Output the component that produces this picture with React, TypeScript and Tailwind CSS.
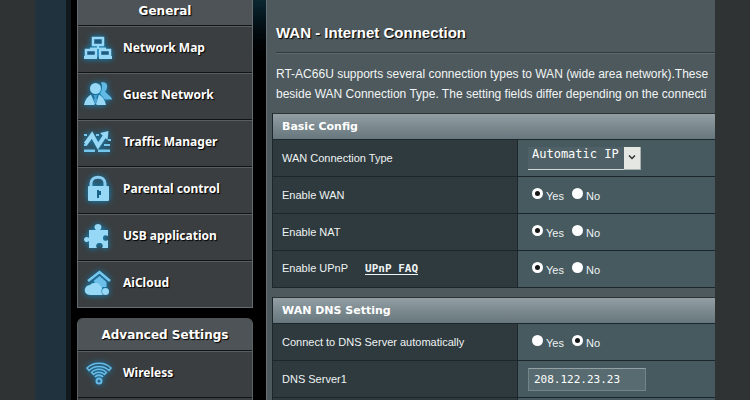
import React, { useState } from 'react';

interface MenuItem {
  label: string;
  icon: React.ReactNode;
}

const generalItems: MenuItem[] = [
  { label: 'Network Map', icon: <NetworkIcon /> },
  { label: 'Guest Network', icon: <GuestIcon /> },
  { label: 'Traffic Manager', icon: <TrafficIcon /> },
  { label: 'Parental control', icon: <LockIcon /> },
  { label: 'USB application', icon: <PuzzleIcon /> },
  { label: 'AiCloud', icon: <CloudIcon /> }
];

const advancedItems: MenuItem[] = [
  { label: 'Wireless', icon: <WirelessIcon /> }
];

function Icon({ children }: { children: React.ReactNode }) {
  return (
    <svg
      viewBox="0 0 30 30"
      aria-hidden="true"
      className="h-[30px] w-[30px] shrink-0 overflow-visible drop-shadow-[0_0_3px_#0a8fd0]"
      fill="#96d8f5"
    >
      {children}
    </svg>
  );
}

function NetworkIcon() {
  return (
    <Icon>
      <g fill="#1d5a80" stroke="#96d8f5" strokeWidth="2.500">
        <rect x="9" y="5" width="10" height="7" />
        <rect x="2" y="17" width="10" height="6" />
        <rect x="16" y="17" width="10" height="6" />
      </g>
      <path d="M13 13h2v2h-2zM6 14.500h16V16H6zM0 23h13v3H0zM15 23h13v3H15z" />
    </Icon>
  );
}

function GuestIcon() {
  return (
    <Icon>
      <path d="M17 2.500c4-1 7 1 6 5-.3 2-1 3-2 4l3 3c3 2 4 4 4 5h-7l-5-6c2-3 3-7 1-11z" fill="#62b9e4" />
      <circle cx="11.500" cy="8.500" r="5.500" />
      <path d="M0 25c1-5 3-8 7-10.500L11 24l-1 1zM15 14.500c4 2.500 6 5.500 7 10.500h-9l-1-1z" />
      <path d="M9.500 15h4l-1 2.500.8 3.500-1.800 3-1.800-3 .8-3.500z" fill="#4c9fce" />
    </Icon>
  );
}

function TrafficIcon() {
  return (
    <Icon>
      <path d="M0 7h3v2H0zM0 17h3v2H0zM0 22.500h11V25H0zM14 22.500h12V25H14zM20 17h6v2h-6zM12 7h3v2h-3zM24 12h3v2h-3z" fill="#74c6ed" />
      <path d="M1.500 17L8 8l6 11 8-12" fill="none" stroke="#96d8f5" strokeWidth="4" />
      <path d="M16 6l8.500-2-1 9z" />
    </Icon>
  );
}

function LockIcon() {
  return (
    <Icon>
      <path d="M7 13V9.500c0-8.500 14-8.500 14 0V13" fill="none" stroke="#8acdf0" strokeWidth="3" />
      <rect x="4" y="12" width="21" height="15" rx="1" />
      <path d="M13 16h2v1h2v4h-2v3h-2z" fill="#17638a" />
    </Icon>
  );
}

function PuzzleIcon() {
  return (
    <Icon>
      <path d="M5 9h7c-3-3-1-6 2-6s5 3 2 6h8v6c-4-2-5 0-5 2s1 4 5 2v8h-6c2-3 0-5-2.500-5s-4.500 2-2.500 5H5v-7c-2 2-5 1-5-1.500S3 15 5 17z" />
    </Icon>
  );
}

function CloudIcon() {
  return (
    <Icon>
      <path d="M4 13L15.500 4 26 13" fill="none" stroke="#77c8f0" strokeWidth="2.500" />
      <path d="M15.500 8l7 6v5h-7l-6-6z" fill="#6bbfe9" />
      <path d="M6 27c-7 0-7-9.500 0-10 3-3.500 9-3 10.500 1 2 1 2 2.500 1 4 0 2 0 4 1.500 5z" />
      <circle cx="21.500" cy="23.500" r="3.500" />
    </Icon>
  );
}

function WirelessIcon() {
  return (
    <Icon>
      <g fill="none" stroke="#68bbe8" strokeWidth="1.500">
        <path d="M3 10c6-6.500 18-6.500 24 0l-2 2.500c-5-5.500-15-5.500-20 0z" />
        <path d="M7.500 14.500c4-4.500 11-4.500 15 0l-2 2c-3-3-8-3-11 0z" />
        <path d="M11 19c2-2.500 6-2.500 8 0" strokeWidth="2" />
        <circle cx="15" cy="23" r="2.500" strokeWidth="2" />
      </g>
    </Icon>
  );
}

function MenuRow({ label, icon }: MenuItem) {
  return (
    <li className="h-[47px] border-t border-[#111415]">
      <a
        href="#"
        className="flex h-full items-center gap-[9px] border-t border-[#575d60] pb-[3px] pl-[6px] font-['Noto_Sans',sans-serif] text-[12px] leading-4 font-bold text-white [text-shadow:1px_1px_1px_#000]"
      >
        {icon}
        {label}
      </a>
    </li>
  );
}

interface YesNoProps {
  name: string;
  value: boolean;
  onChange: (value: boolean) => void;
}

function YesNo({ name, value, onChange }: YesNoProps) {
  const options = [
    { text: 'Yes', on: true },
    { text: 'No', on: false }
  ];

  return (
    <div className="flex gap-[8px] pl-[4px]">
      {options.map(option => (
        <label key={option.text} className="flex items-start gap-[3px]">
          <input
            type="radio"
            name={name}
            checked={value === option.on}
            onChange={() => onChange(option.on)}
            className="h-[11px] w-[11px] appearance-none rounded-full bg-white checked:border-[3px] checked:border-white checked:bg-[#151515]"
          />
          <span className="pt-[1px] leading-[14px]">{option.text}</span>
        </label>
      ))}
    </div>
  );
}

function SettingsTable({ title, children }: { title: string; children: React.ReactNode }) {
  return (
    <table className="w-full table-fixed border-separate border-spacing-0 border-l border-[#1d2629] text-[11px] text-[#eef3f3]">
      <colgroup>
        <col className="w-[245px]" />
        <col />
      </colgroup>
      <thead>
        <tr>
          <th
            colSpan={2}
            className="h-[27px] border-y border-t-[#2b3538] border-b-[#1d2629] bg-linear-to-b from-[#929ea3] to-[#67777d] p-0 pl-[9px] text-left font-['DejaVu_Sans',sans-serif] leading-4 font-bold text-white"
          >
            {title}
          </th>
        </tr>
      </thead>
      <tbody>{children}</tbody>
    </table>
  );
}

function SettingRow({ label, children }: { label: React.ReactNode; children?: React.ReactNode }) {
  return (
    <tr>
      <th scope="row" className="h-[37px] border-r border-b border-[#1d2629] bg-[#2f3a3e] p-0 pl-[9px] text-left font-normal">
        {label}
      </th>
      <td className="h-[37px] border-b border-[#1d2629] bg-[#475a5f] p-0 pl-[10px]">{children}</td>
    </tr>
  );
}

export default function App() {
  const [wan, setWan] = useState(true);
  const [nat, setNat] = useState(true);
  const [upnp, setUpnp] = useState(true);
  const [autoDns, setAutoDns] = useState(false);
  const [dns, setDns] = useState('208.122.23.23');

  return (
    <div className="flex h-screen overflow-hidden bg-[#303334] px-[35px] font-['Liberation_Sans',Arial,sans-serif]">
      <div className="w-[31px] shrink-0 bg-[#1f323d]" />
      <div className="w-[5px] shrink-0 bg-[#11191d]" />

      <aside className="w-[195px] shrink-0 bg-linear-to-b from-[#0c2731] to-black to-[70px] pr-[13px]">
        <div className="h-full bg-black pl-[6px]">
          <nav className="border-x border-b border-[#666d70] bg-[#3a3e40]">
            <h2 className="h-[25px] bg-[#4d5356] pt-[3px] text-center font-['DejaVu_Sans',sans-serif] text-[12px] leading-4 font-bold text-white [text-shadow:1px_1px_1px_#000]">
              General
            </h2>
            <ul>
              {generalItems.map(item => (
                <MenuRow key={item.label} {...item} />
              ))}
            </ul>
          </nav>

          <nav className="mt-[10px] rounded-t-[6px] border-x border-[#5b6265] bg-[#3a3e40]">
            <h2 className="h-[32px] rounded-t-[6px] bg-[#4d5356] pt-[9px] text-center font-['DejaVu_Sans',sans-serif] text-[12px] leading-4 font-bold text-white [text-shadow:1px_1px_1px_#000]">
              Advanced Settings
            </h2>
            <ul>
              {advancedItems.map(item => (
                <MenuRow key={item.label} {...item} />
              ))}
              <li className="h-[47px] border-t border-[#111415]" />
            </ul>
          </nav>
        </div>
      </aside>

      <main className="min-w-0 flex-1 overflow-hidden border-l border-[#667277] bg-[#4d595d] pl-[5px]">
        <h1 className="mx-[4px] pt-[23px] pb-[9px] text-[15px] leading-5 font-bold whitespace-nowrap text-white [text-shadow:1px_1px_1px_#000]">
          WAN - Internet Connection
        </h1>
        <hr className="ml-[4px] border-t border-b border-t-[#303b3f] border-b-[#5d696d]" />
        <p className="mt-[10px] ml-[4px] text-[12px] leading-5 whitespace-nowrap text-[#f2f5f5]">
          RT-AC66U supports several connection types to WAN (wide area network).These
          <br />
          beside WAN Connection Type. The setting fields differ depending on the connecti
        </p>

        <div className="mt-[9px] flex flex-col gap-[9px]">
          <SettingsTable title="Basic Config">
            <SettingRow label={<label htmlFor="wan-type">WAN Connection Type</label>}>
              <div className="relative w-[113px]">
                <select
                  id="wan-type"
                  className="block h-[23px] w-full appearance-none border-b border-[#cfd6d6] bg-[#4f6166] pr-[17px] pb-[7px] pl-[4px] font-['DejaVu_Sans_Mono',monospace] text-[12px] leading-[14px] text-white"
                >
                  <option>Automatic IP</option>
                </select>
                <span className="pointer-events-none absolute top-0 right-0 flex h-[23px] w-[17px] items-center justify-center border-r border-b border-[#a9b0ae] bg-[#e4e7e2]">
                  <svg viewBox="0 0 8 5" className="h-[5px] w-[8px]" fill="none" stroke="#333" strokeWidth="1.500" aria-hidden="true">
                    <path d="M1 .5l3 3 3-3" />
                  </svg>
                </span>
              </div>
            </SettingRow>
            <SettingRow label="Enable WAN">
              <YesNo name="wan" value={wan} onChange={setWan} />
            </SettingRow>
            <SettingRow label="Enable NAT">
              <YesNo name="nat" value={nat} onChange={setNat} />
            </SettingRow>
            <SettingRow
              label={
                <>
                  Enable UPnP
                  <a href="#" className="ml-[17px] font-['DejaVu_Sans_Mono',monospace] font-bold underline underline-offset-2">
                    UPnP FAQ
                  </a>
                </>
              }
            >
              <YesNo name="upnp" value={upnp} onChange={setUpnp} />
            </SettingRow>
          </SettingsTable>

          <SettingsTable title="WAN DNS Setting">
            <SettingRow label="Connect to DNS Server automatically">
              <YesNo name="auto-dns" value={autoDns} onChange={setAutoDns} />
            </SettingRow>
            <SettingRow label={<label htmlFor="dns1">DNS Server1</label>}>
              <input
                id="dns1"
                type="text"
                value={dns}
                onChange={e => setDns(e.target.value)}
                className="block h-[23px] w-[118px] border border-[#72858a] border-t-[#93a1a4] bg-[#576b70] px-[5px] font-['DejaVu_Sans_Mono',monospace] text-[11px] text-white"
              />
            </SettingRow>
            <SettingRow label="" />
          </SettingsTable>
        </div>
      </main>
    </div>
  );
}
